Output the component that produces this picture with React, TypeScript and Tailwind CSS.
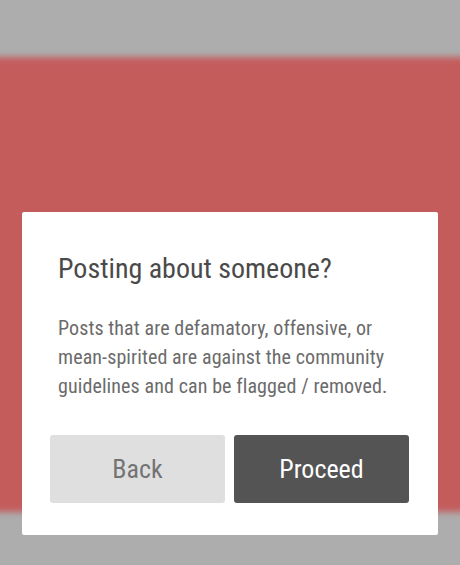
export default function App() {
  return (
    <div className="relative w-[460px] h-[565px] overflow-hidden bg-[#adadad] font-['Roboto',sans-serif] font-stretch-condensed">
      <div className="flex flex-col h-full">
        <div className="h-[57px] shrink-0" />
        <div className="h-[455px] shrink-0 bg-[#c45c5c] blur-[3px] -mx-4" />
      </div>
      <div className="absolute left-[22px] top-[212px] w-[416px] h-[323px] bg-white rounded-[2px] flex flex-col">
        <div className="pl-[36px] pr-4 pt-[39px]">
          <h1 className="text-[28px] leading-[36px] text-[#4a4a4a]">Posting about someone?</h1>
          <p className="mt-[27px] text-[20px] leading-[29px] text-[#6b6b6b] tracking-[0.1px]">
            Posts that are defamatory, offensive, or
            <br />
            mean-spirited are against the community
            <br />
            guidelines and can be flagged / removed.
          </p>
        </div>
        <div className="mt-auto flex gap-[9px] pl-[28px] pr-[29px] pb-[32px]">
          <button className="w-[175px] h-[68px] rounded-[3px] bg-[#dfdfdf] text-[#737373] text-[26px]">Back</button>
          <button className="w-[175px] h-[68px] rounded-[3px] bg-[#545454] text-white text-[26px]">Proceed</button>
        </div>
      </div>
    </div>
  );
}
